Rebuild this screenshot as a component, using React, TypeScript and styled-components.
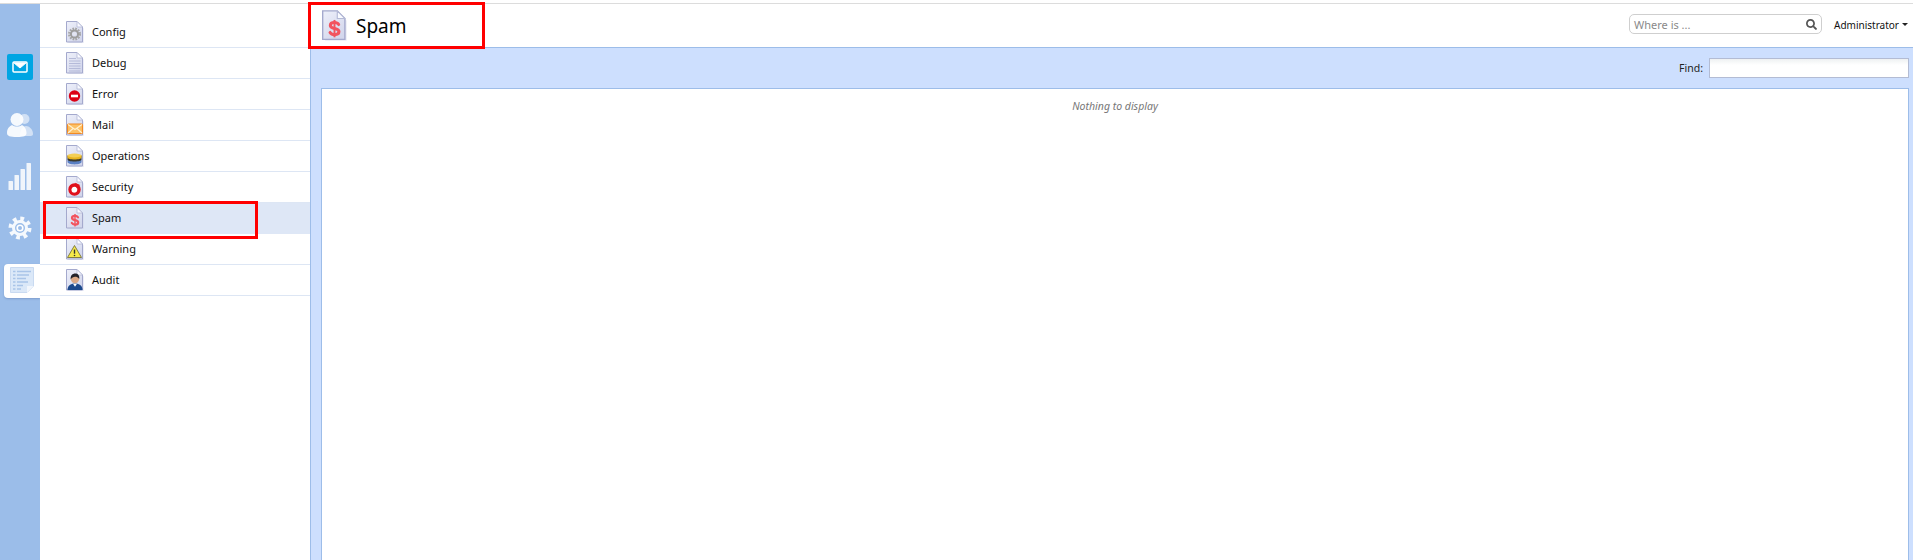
import React, { useId } from "react";
import styled, { createGlobalStyle } from "styled-components";
import { FaSearch } from "react-icons/fa";

const Global = createGlobalStyle`
  html, body { margin: 0; padding: 0; background: #fff; }
  body { font-family: "Noto Sans", "Liberation Sans", sans-serif; font-size: 11px; color: #000; }
`;

const Page = styled.div`
  position: relative;
  height: 560px;
  width: 1913px;
  overflow: hidden;
  padding-top: 3px;
  box-sizing: border-box;
  display: flex;
  flex-direction: column;
`;
const TopLine = styled.div`
  height: 1px;
  background: #dcdcdc;
  flex: none;
`;
const Body = styled.div`
  flex: 1;
  display: flex;
  min-height: 0;
`;
const Rail = styled.nav`
  width: 40px;
  flex: none;
  background: #9bbde9;
  padding-top: 50px;
  box-sizing: border-box;
  display: flex;
  flex-direction: column;
`;
const RailSlot = styled.div<{ $top: number; $h: number }>`
  margin-top: ${(p) => p.$top}px;
  height: ${(p) => p.$h}px;
  width: 40px;
  display: flex;
  justify-content: center;
`;
const MailTile = styled.div`
  width: 26px;
  height: 26px;
  border-radius: 2px;
  background: #00a5e3;
  display: flex;
  align-items: center;
  justify-content: center;
`;
const ActiveTab = styled.div`
  width: 36px;
  height: 34px;
  margin-left: 4px;
  background: #fff;
  border-radius: 4px 0 0 4px;
  box-shadow: 0 1px 2px rgba(90, 120, 170, 0.45);
  display: flex;
  align-items: flex-start;
  padding: 3px 0 0 6px;
  box-sizing: border-box;
`;
const Sidebar = styled.aside`
  width: 270px;
  flex: none;
  padding-top: 13px;
  box-sizing: border-box;
  background: #fff;
`;
const Row = styled.div<{ $active?: boolean }>`
  height: 31px;
  box-sizing: border-box;
  border-bottom: 1px solid ${(p) => (p.$active ? "#dee7f6" : "#dde6f4")};
  background: ${(p) => (p.$active ? "#dee7f6" : "#fff")};
  display: flex;
  align-items: center;
  padding-left: 26px;
`;
const RowIcon = styled.div`
  width: 26px;
  flex: none;
  display: flex;
  align-items: center;
`;
const RowLabel = styled.span`
  font-size: 11px;
  line-height: 14px;
  color: #111;
`;
const Main = styled.main`
  flex: 1;
  min-width: 0;
  display: flex;
  flex-direction: column;
`;
const Header = styled.header`
  height: 43px;
  flex: none;
  display: flex;
  align-items: center;
  padding: 0 5px 0 12px;
  box-sizing: border-box;
`;
const Title = styled.h1`
  margin: 0 0 0 9px;
  font-size: 19px;
  font-weight: 400;
  line-height: 26px;
  color: #000;
  flex: 1;
`;
const SearchBox = styled.div`
  width: 193px;
  height: 20px;
  margin-bottom: 3px;
  box-sizing: border-box;
  border: 1px solid #cfcfcf;
  border-radius: 5px;
  display: flex;
  align-items: center;
  justify-content: space-between;
  padding: 0 4px;
  color: #8a8a8a;
  font-size: 11px;
`;
const UserMenu = styled.div`
  margin-left: 12px;
  margin-bottom: 2px;
  display: flex;
  align-items: center;
  gap: 3px;
  font-size: 10px;
  color: #111;
`;
const Caret = styled.span`
  width: 0;
  height: 0;
  border-left: 3px solid transparent;
  border-right: 3px solid transparent;
  border-top: 3px solid #222;
`;
const Panel = styled.section`
  flex: 1;
  min-height: 0;
  display: flex;
  flex-direction: column;
  background: #cddffe;
  border-top: 1px solid #9dbde9;
  border-left: 1px solid #9dbde9;
`;
const Toolbar = styled.div`
  height: 40px;
  flex: none;
  display: flex;
  align-items: center;
  justify-content: flex-end;
  gap: 6px;
  padding-right: 4px;
  box-sizing: border-box;
`;
const FindLabel = styled.label`
  font-size: 10.5px;
  color: #222;
`;
const FindInput = styled.div`
  width: 200px;
  height: 20px;
  box-sizing: border-box;
  border: 1px solid #b3bcd4;
  background: linear-gradient(#eef1f2, #fff 6px);
`;
const Grid = styled.div`
  flex: 1;
  margin: 0 4px 0 10px;
  background: #fff;
  border: 1px solid #9dbde9;
  border-bottom: none;
  padding-top: 9px;
  text-align: center;
  line-height: 15px;
`;
const Empty = styled.em`
  font-size: 10.5px;
  color: #777;
`;
const Callout = styled.div<{ $x: number; $y: number; $w: number; $h: number }>`
  position: absolute;
  left: ${(p) => p.$x}px;
  top: ${(p) => p.$y}px;
  width: ${(p) => p.$w}px;
  height: ${(p) => p.$h}px;
  box-sizing: border-box;
  border: 3px solid #f00;
  pointer-events: none;
`;

type Kind = "config" | "debug" | "error" | "mail" | "ops" | "security" | "spam" | "warning" | "audit";

const Glyph = ({ kind }: { kind: Kind }) => {
  switch (kind) {
    case "config":
      return (
        <g>
          <circle cx="8.500" cy="13" r="5.300" fill="none" stroke="#a6a6a6" strokeWidth="2.400" strokeDasharray="1.700 1.080" />
          <circle cx="8.500" cy="13" r="3.600" fill="none" stroke="#9d9d9d" strokeWidth="2" />
          <circle cx="8.500" cy="13" r="1.500" fill="#e4e6f2" />
        </g>
      );
    case "debug":
      return (
        <g stroke="#b0b6d6" strokeWidth="0.900">
          <path d="M3 6.500h7M3 9h11.500M3 11.500h11.500M3 14h11.500M3 16.500h11.500M3 19h11.500" />
        </g>
      );
    case "error":
      return (
        <g>
          <circle cx="8.500" cy="13" r="5.700" fill="#dc0015" />
          <rect x="5" y="11.700" width="7" height="2.600" fill="#fff" />
        </g>
      );
    case "mail":
      return (
        <g>
          <rect x="1.500" y="10" width="15" height="9.500" rx="1" fill="#fcc066" stroke="#f28a22" strokeWidth="1.100" />
          <path d="M2 10.500 9 15.500l7-5M2 19 7 14.500M16 19l-5-4.500" fill="none" stroke="#fff1d2" strokeWidth="1.100" />
        </g>
      );
    case "ops":
      return (
        <g>
          <path d="M1.500 14.500h14v2.500c0 1.400-3.100 2.400-7 2.400s-7-1-7-2.400z" fill="#5a80c4" />
          <path d="M1.500 10.500h14v4c0 1.200-3.100 2-7 2s-7-.8-7-2z" fill="#3b3a2c" />
          <path d="M1.500 10.500h14v2c0 1.200-3.100 2-7 2s-7-.8-7-2z" fill="#e8b420" />
          <ellipse cx="8.500" cy="10.500" rx="7" ry="1.900" fill="#f3ce55" />
        </g>
      );
    case "security":
      return (
        <g>
          <circle cx="8.500" cy="13.500" r="4.500" fill="#fff" stroke="#e0101c" strokeWidth="3.400" />
          <path d="M9 6.800l5 2.200-3.200 3.500z" fill="#e0101c" />
          <circle cx="8.200" cy="14" r="2.600" fill="#fff" />
        </g>
      );
    case "spam":
      return <SpamMark />;
    case "warning":
      return (
        <g>
          <path d="M8.500 7.500 15.500 19.500h-14z" fill="#f6e94a" stroke="#77733a" strokeWidth="0.900" strokeLinejoin="round" />
          <path d="M8.500 11.500v4.200" stroke="#333" strokeWidth="1.400" />
          <circle cx="8.500" cy="17.500" r="0.800" fill="#333" />
        </g>
      );
    case "audit":
      return (
        <g>
          <path d="M1.500 21c0-4.200 3-6.500 7.500-6.500s7.500 2.300 7.500 6.500z" fill="#1d4a8c" />
          <path d="M7 14.800l2 3 2-3z" fill="#fff" />
          <circle cx="9" cy="10" r="4.200" fill="#dba987" />
          <path d="M4.700 10.500c-.6-4 1.900-6 4.500-6s4.800 2 4 5.500c-1-1.800-2.600-2.300-4.200-2.300s-3.200 1-4.300 2.800z" fill="#23232a" />
        </g>
      );
  }
};

const SpamMark = () => (
  <g fill="none" stroke="#f2545f" strokeLinecap="round">
    <path d="M12 10.300c-.6-1-1.700-1.400-3-1.400-1.800 0-3 .8-3 2.100 0 2.900 6.200 1.400 6.200 4.400 0 1.300-1.300 2.200-3.100 2.200-1.500 0-2.700-.6-3.300-1.600" strokeWidth="2.200" />
    <path d="M9 7v12.500" strokeWidth="1.400" strokeLinecap="butt" />
  </g>
);

const DocIcon = ({ kind, w = 18, h = 22 }: { kind: Kind; w?: number; h?: number }) => {
  const id = useId();
  return (
    <svg width={w} height={h} viewBox="0 0 18 22" aria-hidden="true">
      <defs>
        <linearGradient id={id} x1="0" y1="0" x2="0.700" y2="1">
          <stop offset="0" stopColor="#eef0fa" />
          <stop offset="1" stopColor="#d3d7ec" />
        </linearGradient>
      </defs>
      <path d="M1.500 1.500h10l5.500 5.500v14.500H1.500z" fill="#cfd3e6" opacity="0.45" transform="translate(.8 .5)" />
      <path d="M.5.500h10.500l5.500 5.500v15H.500z" fill={`url(#${id})`} stroke="#a4a9cd" strokeWidth="1" />
      <path d="M11 .500V6h5.500z" fill="#fafbff" stroke="#b4b9d6" strokeWidth="0.800" strokeLinejoin="round" />
      <Glyph kind={kind} />
    </svg>
  );
};

const items: { label: string; kind: Kind }[] = [
  { label: "Config", kind: "config" },
  { label: "Debug", kind: "debug" },
  { label: "Error", kind: "error" },
  { label: "Mail", kind: "mail" },
  { label: "Operations", kind: "ops" },
  { label: "Security", kind: "security" },
  { label: "Spam", kind: "spam" },
  { label: "Warning", kind: "warning" },
  { label: "Audit", kind: "audit" },
];

export default function App() {
  return (
    <Page>
      <Global />
      <TopLine />
      <Body>
        <Rail>
          <RailSlot $top={0} $h={26}>
            <MailTile>
              <svg width="16" height="12" viewBox="0 0 16 12" aria-hidden="true">
                <rect x="1" y="1" width="14" height="10" rx="1" fill="none" stroke="#fff" strokeWidth="1.500" />
                <path d="M1.500 1.500 8 7l6.500-5.500" fill="#fff" stroke="#fff" strokeWidth="1" />
              </svg>
            </MailTile>
          </RailSlot>
          <RailSlot $top={32} $h={25}>
            <svg width="28" height="26" viewBox="0 0 28 26" aria-hidden="true">
              <circle cx="18.500" cy="7" r="5" fill="#fff" opacity="0.55" />
              <path d="M14 24c0-6 3-10 6-10s7 3 7 8c0 2-2 2-4 2z" fill="#fff" opacity="0.55" />
              <circle cx="11" cy="7.500" r="6.500" fill="#fff" opacity="0.9" />
              <path d="M1 21c0-5 3-7 5-8 3 2 7 2 10 0 2 1 4.500 3.500 4.500 8 0 3-2.500 4-9.500 4S1 24 1 21z" fill="#fff" opacity="0.9" />
            </svg>
          </RailSlot>
          <RailSlot $top={26} $h={27}>
            <svg width="24" height="27" viewBox="0 0 24 27" aria-hidden="true" fill="#fff" opacity="0.85">
              <rect x="0.500" y="18" width="4.500" height="9" rx="0.600" />
              <rect x="6.500" y="12" width="4.500" height="15" rx="0.600" />
              <rect x="12.500" y="6" width="4.500" height="21" rx="0.600" />
              <rect x="18.500" y="0" width="4.500" height="27" rx="0.600" />
            </svg>
          </RailSlot>
          <RailSlot $top={27} $h={22}>
            <svg width="24" height="24" viewBox="0 0 24 24" aria-hidden="true" style={{ marginTop: -1 }}>
              <circle cx="12" cy="12" r="9.500" fill="none" stroke="#fff" strokeWidth="4" strokeDasharray="3.730 3.730" opacity="0.9" />
              <circle cx="12" cy="12" r="6.500" fill="none" stroke="#fff" strokeWidth="3" opacity="0.9" />
              <circle cx="12" cy="12" r="2.800" fill="none" stroke="#fff" strokeWidth="1.600" />
            </svg>
          </RailSlot>
          <RailSlot $top={25} $h={34}>
            <ActiveTab>
              <svg width="24" height="26" viewBox="0 0 24 26" aria-hidden="true">
                <path d="M.500.500h23V19l-6.500 6.500H.500z" fill="#dbe8f8" stroke="#c9daf1" />
                <path d="M17 25.500V19h6.500z" fill="#f2f6fc" />
                <path d="M3 4.500h2.500M7 4.500h14M3 8h2.500M7 8h12M3 11.500h2.500M7 11.500h9M3 15h2.500M7 15h11M3 18.500h2.500M7 18.500h6M3 22h2.500M7 22h4" stroke="#a9c4e8" strokeWidth="1.300" />
              </svg>
            </ActiveTab>
          </RailSlot>
        </Rail>
        <Sidebar>
          {items.map((it) => (
            <Row key={it.label} $active={it.kind === "spam"}>
              <RowIcon>
                <DocIcon kind={it.kind} />
              </RowIcon>
              <RowLabel>{it.label}</RowLabel>
            </Row>
          ))}
        </Sidebar>
        <Main>
          <Header>
            <DocIcon kind="spam" w={25} h={31} />
            <Title>Spam</Title>
            <SearchBox>
              <span>Where is ...</span>
              <FaSearch size={11} color="#555" />
            </SearchBox>
            <UserMenu>
              Administrator
              <Caret />
            </UserMenu>
          </Header>
          <Panel>
            <Toolbar>
              <FindLabel>Find:</FindLabel>
              <FindInput />
            </Toolbar>
            <Grid>
              <Empty>Nothing to display</Empty>
            </Grid>
          </Panel>
        </Main>
      </Body>
      <Callout $x={308} $y={2} $w={177} $h={47} />
      <Callout $x={43} $y={201} $w={215} $h={38} />
    </Page>
  );
}
